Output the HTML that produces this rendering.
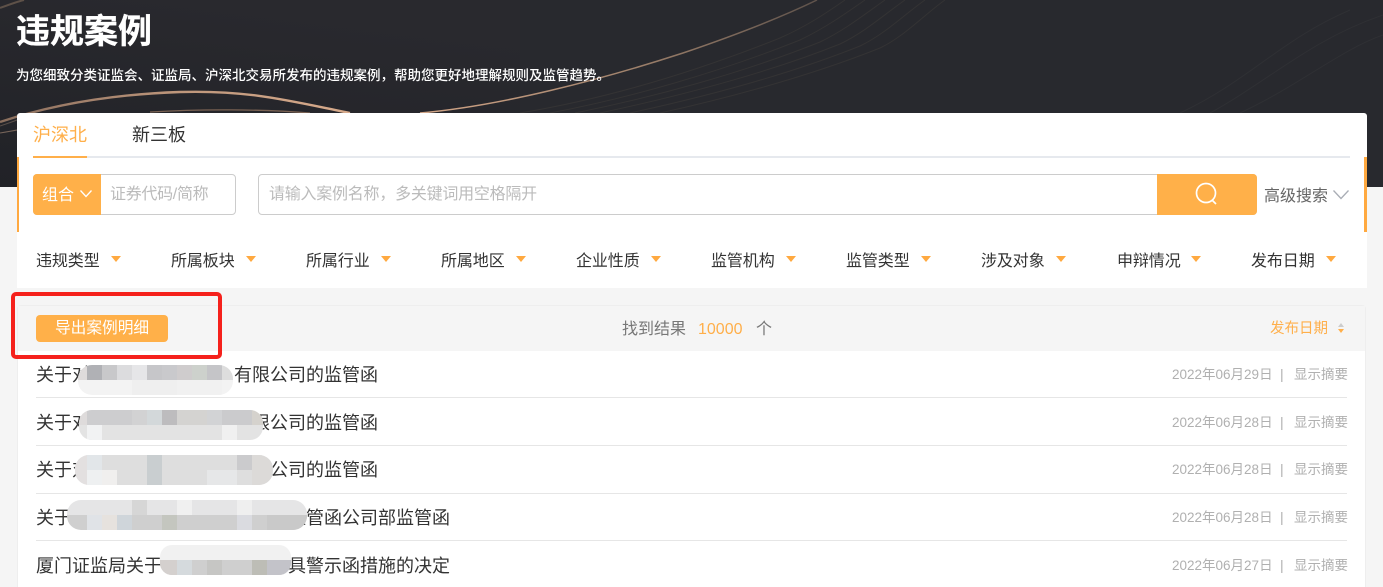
<!DOCTYPE html>
<html lang="zh"><head><meta charset="utf-8"><title>违规案例</title>
<style>
*{box-sizing:border-box;margin:0;padding:0}
html,body{width:1383px;height:587px;overflow:hidden;background:#f5f5f5}
body{position:relative;font-family:"Liberation Sans","Noto Sans CJK SC",sans-serif;color:#333}
.a{position:absolute;white-space:nowrap}
.t{line-height:24px;height:24px}
.f{font-size:16px;top:250px;color:#333;letter-spacing:-.1px}
.tri{position:absolute;top:256px;width:0;height:0;border-left:5px solid transparent;border-right:5px solid transparent;border-top:6px solid #ffa940}
.r{font-size:18px;left:36px;color:#333}
.r b{display:inline-block;font-weight:400}
.d{font-size:13.5px;left:1172px;color:#b0b0b0}
.sep{font-size:14px;left:1280px;color:#b0b0b0}
.s{font-size:13.5px;left:1294px;color:#b0b0b0}
.l{position:absolute;left:36px;width:1311px;height:1px;background:#e6e6e6}
</style></head><body>

<svg class="a" style="left:0;top:0" width="1383" height="187" viewBox="0 0 1383 187">
<defs>
<linearGradient id="bg" x1="0" y1="1" x2="0.35" y2="0"><stop offset="0" stop-color="#212227"/><stop offset="1" stop-color="#29292e"/></linearGradient>
<linearGradient id="g1" x1="0" y1="0" x2="1" y2="0"><stop offset="0" stop-color="#8a6e5d"/><stop offset=".5" stop-color="#bd967b"/><stop offset="1" stop-color="#d8ab8c"/></linearGradient>
<linearGradient id="g2" gradientUnits="userSpaceOnUse" x1="430" y1="0" x2="830" y2="0"><stop offset="0" stop-color="#d0a486"/><stop offset=".5" stop-color="#a0826c"/><stop offset="1" stop-color="#5a4f49"/></linearGradient>
</defs>
<rect width="1383" height="187" fill="#28292e"/>
<rect width="520" height="187" fill="url(#bg)"/>
<path d="M0 122C30 112 90 95 180 92C250 90 290 101 350 113" fill="none" stroke="url(#g1)" stroke-width="2.4"/>
<path d="M150 112C200 109 260 109 310 113" fill="none" stroke="#7a6253" stroke-width="1.3"/>
<path d="M0 133C6 132 12 131 17 130" fill="none" stroke="#77655a" stroke-width="1"/>
<path d="M0 126C6 124 12 122 17 120" fill="none" stroke="#5a4f49" stroke-width="1"/>
<path d="M0 8C8 5 16 2 24 0" fill="none" stroke="#5e5148" stroke-width="2"/>
<path d="M420 113C500 106 600 80 683 53C730 37 780 18 817 0" fill="none" stroke="url(#g2)" stroke-width="1.5"/>
<g fill="none" stroke="#343334" stroke-width="1">
<path d="M520 113C610 98 700 70 780 38C805 27 825 14 845 0"/>
<path d="M550 113C630 98 720 72 800 40C825 28 845 14 865 0"/>
<path d="M575 113C650 98 740 74 820 42C845 30 865 14 885 0"/>
<path d="M600 113C670 98 760 76 840 44C865 32 885 14 905 0"/>
<path d="M630 113C690 100 780 78 860 46C885 34 905 14 925 0"/>
<path d="M660 113C710 102 800 80 880 48C905 36 925 14 945 0"/>
</g>
<g fill="none" stroke="#2f3034" stroke-width="1">
<path d="M1180 113C1250 80 1280 40 1350 10"/>
<path d="M1210 113C1270 80 1310 40 1383 15"/>
<path d="M1240 113C1300 85 1340 50 1383 35"/>
</g>
</svg>

<div class="a" style="left:16px;top:9px;font-size:34px;line-height:46px;font-weight:700;color:#fff;-webkit-text-stroke:.3px #fff">违规案例</div>
<div class="a" style="left:16px;top:65px;font-size:13.5px;line-height:22px;color:#fff;font-weight:500">为您细致分类证监会、证监局、沪深北交易所发布的违规案例，帮助您更好地理解规则及监管趋势。</div>

<div class="a" style="left:17px;top:113px;width:1350px;height:175px;background:#fff;border-radius:3px 3px 0 0"></div>
<div class="a" style="left:17px;top:157px;width:2px;height:75px;background:#ffa940"></div>
<div class="a" style="left:1364px;top:157px;width:3px;height:75px;background:#ffa940"></div>

<div class="a t" style="left:33px;top:123px;font-size:18px;color:#ffaf4a">沪深北</div>
<div class="a t" style="left:132px;top:123px;font-size:18px;color:#333">新三板</div>
<div class="a" style="left:33px;top:156px;width:1317px;height:2px;background:#e6e9ee"></div>
<div class="a" style="left:33px;top:156px;width:54px;height:2px;background:#ffaf4a"></div>

<div class="a" style="left:33px;top:174px;width:203px;height:41px;border:1px solid #ccc;border-radius:4px;background:#fff"></div>
<div class="a" style="left:33px;top:174px;width:68px;height:41px;background:#ffb049;border-radius:4px 0 0 4px"></div>
<div class="a t" style="left:42px;top:184px;font-size:16px;color:#fff">组合</div>
<svg class="a" style="left:79px;top:189px" width="14" height="10"><path d="M1.5 1.5L7 7.5L12.5 1.5" fill="none" stroke="#fff" stroke-width="1.3"/></svg>
<div class="a t" style="left:110px;top:183px;font-size:16px;color:#bbb;letter-spacing:-.3px">证券代码/简称</div>

<div class="a" style="left:258px;top:174px;width:999px;height:41px;border:1px solid #ccc;border-radius:4px;background:#fff"></div>
<div class="a t" style="left:269px;top:183px;font-size:16px;color:#bbb;letter-spacing:-.24px">请输入案例名称，多关键词用空格隔开</div>
<div class="a" style="left:1157px;top:174px;width:100px;height:41px;background:#ffb049;border-radius:0 4px 4px 0"></div>
<svg class="a" style="left:1192px;top:180px" width="30" height="28"><circle cx="14" cy="13" r="9.5" fill="none" stroke="#fff" stroke-width="1.7"/><path d="M20 20L24 24" stroke="#fff" stroke-width="1.7"/></svg>
<div class="a t" style="left:1264px;top:185px;font-size:16px;color:#666">高级搜索</div>
<svg class="a" style="left:1332px;top:189px" width="18" height="12"><path d="M1.5 1.5L9 9.5L16.5 1.5" fill="none" stroke="#a9adb5" stroke-width="1.3"/></svg>

<div class="a f t" style="left:36px">违规类型</div><i class="tri" style="left:111px"></i>
<div class="a f t" style="left:171px">所属板块</div><i class="tri" style="left:246px"></i>
<div class="a f t" style="left:306px">所属行业</div><i class="tri" style="left:381px"></i>
<div class="a f t" style="left:441px">所属地区</div><i class="tri" style="left:516px"></i>
<div class="a f t" style="left:576px">企业性质</div><i class="tri" style="left:651px"></i>
<div class="a f t" style="left:711px">监管机构</div><i class="tri" style="left:786px"></i>
<div class="a f t" style="left:846px">监管类型</div><i class="tri" style="left:921px"></i>
<div class="a f t" style="left:981px">涉及对象</div><i class="tri" style="left:1056px"></i>
<div class="a f t" style="left:1117px">申辩情况</div><i class="tri" style="left:1191px"></i>
<div class="a f t" style="left:1251px">发布日期</div><i class="tri" style="left:1326px"></i>

<div class="a" style="left:17px;top:305px;width:1349px;height:282px;background:#fff;border:1px solid #eee;border-bottom:0;border-radius:4px 4px 0 0"></div>
<div class="a" style="left:18px;top:306px;width:1347px;height:45px;background:#f5f5f5"></div>

<div class="a" style="left:36px;top:315px;width:132px;height:27px;background:#ffb049;border-radius:4px"></div>
<div class="a t" style="left:55px;top:317px;font-size:15.7px;color:#fff">导出案例明细</div>
<div class="a t" style="left:622px;top:318px;font-size:16px;color:#777">找到结果</div>
<div class="a t" style="left:698px;top:318px;font-size:16px;color:#ffaf4a">10000</div>
<div class="a t" style="left:756px;top:318px;font-size:16px;color:#777">个</div>
<div class="a t" style="left:1270px;top:317px;font-size:14.5px;color:#ffaf4a">发布日期</div>
<svg class="a" style="left:1337px;top:323px" width="8" height="11"><path d="M4 0L7 4H1Z" fill="#ccc"/><path d="M4 10L7 6H1Z" fill="#ffaf4a"/></svg>

<div class="a t r" style="top:363px">关于对<b style="width:144px"></b>有限公司的监管函</div>
<div class="a t r" style="top:411px">关于对<b style="width:162px"></b>限公司的监管函</div>
<div class="a t r" style="top:458px">关于对<b style="width:180px"></b>公司的监管函</div>
<div class="a t r" style="top:506px">关于对<b style="width:198px"></b>监管函公司部监管函</div>
<div class="a t r" style="top:554px">厦门证监局关于<b style="width:126px"></b>具警示函措施的决定</div>

<div class="l" style="top:397px"></div><div class="l" style="top:445px"></div><div class="l" style="top:493px"></div><div class="l" style="top:540px"></div>

<div class="a t d" style="top:363px">2022年06月29日</div><div class="a t sep" style="top:362px">|</div><div class="a t s" style="top:363px">显示摘要</div>
<div class="a t d" style="top:411px">2022年06月28日</div><div class="a t sep" style="top:410px">|</div><div class="a t s" style="top:411px">显示摘要</div>
<div class="a t d" style="top:458px">2022年06月28日</div><div class="a t sep" style="top:457px">|</div><div class="a t s" style="top:458px">显示摘要</div>
<div class="a t d" style="top:506px">2022年06月28日</div><div class="a t sep" style="top:505px">|</div><div class="a t s" style="top:506px">显示摘要</div>
<div class="a t d" style="top:554px">2022年06月27日</div><div class="a t sep" style="top:553px">|</div><div class="a t s" style="top:554px">显示摘要</div>

<svg class="a" style="left:0;top:355px" width="330" height="232" viewBox="0 355 330 232">
<defs>
<clipPath id="c1"><rect x="78" y="365" width="155" height="30" rx="14"/></clipPath>
<clipPath id="c2"><rect x="79" y="410" width="184" height="30" rx="13"/></clipPath>
<clipPath id="c3"><rect x="75" y="455" width="198" height="30" rx="14"/></clipPath>
<clipPath id="c4"><rect x="67" y="500" width="240" height="30" rx="14"/></clipPath>
<clipPath id="c5"><rect x="160" y="545" width="131" height="30" rx="12"/></clipPath>
</defs>
<g clip-path="url(#c1)" shape-rendering="crispEdges">
<rect x="70" y="365" width="170" height="30" fill="#f3f3f3"/>
<rect x="70" y="365" width="17" height="15" fill="#dedbdb"/><rect x="87" y="365" width="15" height="15" fill="#b0b1b5"/><rect x="102" y="365" width="15" height="15" fill="#c8c8ca"/><rect x="117" y="365" width="15" height="15" fill="#dcdcde"/><rect x="132" y="365" width="15" height="15" fill="#e6e6e8"/><rect x="147" y="365" width="15" height="15" fill="#c6c6c9"/><rect x="162" y="365" width="15" height="15" fill="#c9c9cc"/><rect x="177" y="365" width="15" height="15" fill="#cfcccd"/><rect x="192" y="365" width="15" height="15" fill="#cdd1cc"/><rect x="207" y="365" width="15" height="15" fill="#c5c5c8"/><rect x="222" y="365" width="15" height="15" fill="#dddddd"/>
<rect x="132" y="380" width="45" height="15" fill="#efefef"/><rect x="177" y="380" width="45" height="15" fill="#f1f1f1"/>
</g>
<g clip-path="url(#c2)" shape-rendering="crispEdges">
<rect x="70" y="410" width="200" height="30" fill="#e3e3e3"/>
<rect x="70" y="410" width="17" height="15" fill="#dedbdb"/><rect x="87" y="410" width="45" height="15" fill="#cdcdcf"/><rect x="132" y="410" width="15" height="15" fill="#d2d2d3"/><rect x="147" y="410" width="15" height="15" fill="#d3d8da"/><rect x="162" y="410" width="15" height="15" fill="#bdbcbe"/><rect x="177" y="410" width="30" height="15" fill="#d4d3d1"/><rect x="207" y="410" width="15" height="15" fill="#d2d3d5"/><rect x="222" y="410" width="30" height="15" fill="#cbcbcd"/><rect x="252" y="410" width="15" height="15" fill="#d5d2cd"/>
<rect x="87" y="425" width="15" height="15" fill="#f1f2f3"/><rect x="222" y="425" width="15" height="15" fill="#f0f0f0"/>
</g>
<g clip-path="url(#c3)" shape-rendering="crispEdges">
<rect x="70" y="455" width="210" height="30" fill="#dedede"/>
<rect x="70" y="455" width="17" height="30" fill="#e3e0e0"/><rect x="87" y="455" width="15" height="15" fill="#e2e6e9"/><rect x="87" y="470" width="15" height="15" fill="#eef0f1"/><rect x="102" y="470" width="15" height="15" fill="#f0efee"/><rect x="147" y="455" width="15" height="30" fill="#c9ced0"/><rect x="207" y="470" width="30" height="15" fill="#e6e7e8"/><rect x="237" y="455" width="15" height="15" fill="#cbcbcd"/><rect x="252" y="455" width="20" height="30" fill="#dcdad8"/>
</g>
<g clip-path="url(#c4)" shape-rendering="crispEdges">
<rect x="60" y="500" width="250" height="15" fill="#e5e5e6"/><rect x="60" y="515" width="250" height="15" fill="#cfcfcf"/>
<rect x="132" y="500" width="15" height="15" fill="#d6d6d6"/><rect x="177" y="500" width="15" height="15" fill="#f0f0f0"/><rect x="237" y="500" width="15" height="15" fill="#efefef"/><rect x="87" y="515" width="15" height="15" fill="#e0e3e7"/><rect x="102" y="515" width="15" height="15" fill="#e6e2de"/><rect x="117" y="515" width="15" height="15" fill="#cfd5da"/><rect x="162" y="515" width="15" height="15" fill="#c4c6bf"/><rect x="237" y="515" width="15" height="15" fill="#dadbe0"/><rect x="267" y="515" width="40" height="15" fill="#c9c9c9"/>
</g>
<g clip-path="url(#c5)" shape-rendering="crispEdges">
<rect x="160" y="545" width="140" height="15" fill="#f1f1f1"/><rect x="160" y="560" width="140" height="15" fill="#cfcfcf"/>
<rect x="160" y="560" width="17" height="15" fill="#d4d0ce"/><rect x="177" y="560" width="15" height="15" fill="#d5dadd"/><rect x="207" y="560" width="15" height="15" fill="#c6c6c4"/><rect x="252" y="560" width="15" height="15" fill="#bdbdb6"/><rect x="267" y="560" width="24" height="15" fill="#c3c3c9"/>
</g>
</svg>

<div class="a" style="left:11px;top:292px;width:211px;height:67px;border:4px solid #f5211c;border-radius:5px"></div>
</body></html>
